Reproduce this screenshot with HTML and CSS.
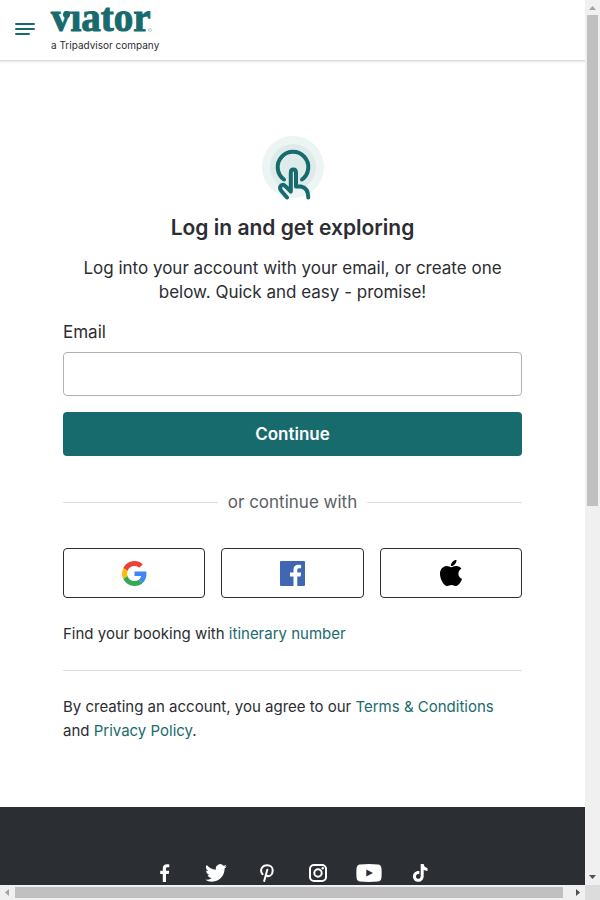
FILE: index.html
```html
<!DOCTYPE html>
<html lang="en">
<head>
<meta charset="utf-8">
<meta name="viewport" content="width=device-width, initial-scale=1">
<title>Viator login</title>
<link rel="stylesheet" href="styles.css">
</head>
<body>
<div class="frame">
  <div class="page">
    <header class="header">
      <button class="menu" type="button" aria-label="Menu">
        <svg width="20" height="14" viewBox="0 0 20 14"><path d="M1 2h18M1 7h18M1 12h13" stroke="currentColor" stroke-width="2" stroke-linecap="round"/></svg>
      </button>
      <a class="brand" href="#" aria-label="viator, a Tripadvisor company">
        <span class="wordmark">vıator<span class="dot"></span><span class="reg"></span></span>
        <span class="tagline">a Tripadvisor company</span>
      </a>
    </header>
    <main class="main">
      <svg class="tap" width="62" height="64" viewBox="0 0 62 64" fill="none">
        <circle cx="31" cy="31" r="31" fill="#ecf5f4"/>
        <circle cx="31" cy="31" r="23" fill="#deebeb"/>
        <g stroke="#186b6d" stroke-width="4" stroke-linecap="round" stroke-linejoin="round">
          <path d="M22 43.500A15.300 15.300 0 1 1 40 43.500"/>
          <path d="M25 61.500L19.400 55C16 50.500 20.200 47 23.600 50.400L28.800 55.600V37C28.800 32.400 34 32.400 34 37V50.500H39Q46.300 52 46.300 61.500"/>
        </g>
      </svg>
      <h1 class="title">Log in and get exploring</h1>
      <p class="intro">Log into your account with your email, or create one below. Quick and easy - promise!</p>
      <form class="form">
        <label class="label" for="email">Email</label>
        <input class="input" id="email" type="email">
        <button class="submit" type="button">Continue</button>
      </form>
      <div class="divider"><span>or continue with</span></div>
      <div class="providers">
        <button type="button" aria-label="Google">
          <svg width="25" height="25" viewBox="0 0 48 48"><path fill="#ea4335" d="M24 9.500c3.540 0 6.710 1.220 9.210 3.600l6.850-6.850C35.900 2.380 30.470 0 24 0 14.620 0 6.510 5.380 2.560 13.220l7.980 6.190C12.430 13.720 17.740 9.500 24 9.500z"/><path fill="#4285f4" d="M46.980 24.550c0-1.570-.15-3.090-.38-4.550H24v9.020h12.940c-.58 2.960-2.260 5.480-4.780 7.180l7.730 6c4.510-4.180 7.090-10.360 7.090-17.650z"/><path fill="#fbbc05" d="M10.530 28.590c-.48-1.450-.76-2.990-.76-4.590s.27-3.140.76-4.590l-7.980-6.190C.92 16.460 0 20.120 0 24c0 3.880.92 7.540 2.560 10.780l7.970-6.190z"/><path fill="#34a853" d="M24 48c6.480 0 11.930-2.130 15.890-5.810l-7.730-6c-2.150 1.450-4.920 2.300-8.160 2.300-6.260 0-11.570-4.220-13.470-9.910l-7.980 6.190C6.510 42.620 14.620 48 24 48z"/></svg>
        </button>
        <button type="button" aria-label="Facebook">
          <svg width="25" height="25" viewBox="0 0 25 25"><rect width="25" height="25" rx="1" fill="#4267b2"/><path fill="#fff" d="M13.500 25V15.400H10v-3.900h3.500V8.600c0-3.200 2-4.900 4.800-4.900q1.700 0 2.800.2v3.300h-2c-1.400 0-1.800.8-1.800 1.800v2.500h3.800l-.5 3.900h-3.300V25z"/></svg>
        </button>
        <button type="button" aria-label="Apple">
          <svg width="22" height="26" viewBox="4 26 376 445" preserveAspectRatio="none"><path d="M318.700 258.700c-.2-36.700 16.400-64.400 50-84.800-18.800-26.900-47.200-41.700-84.700-44.600-35.500-2.800-74.300 20.700-88.500 20.700-15 0-49.400-19.700-76.400-19.700C63.300 131.200 4 175.100 4 264.500q0 39.600 14.400 81.200c12.800 36.700 59 126.700 107.200 125.200 25.200-.6 43-17.900 75.800-17.900 31.800 0 48.300 17.900 76.400 17.900 48.600-.7 90.400-82.500 102.600-119.300-65.200-30.700-61.700-90-61.700-92.900zM262.100 94.500c27.300-32.400 24.800-61.900 24-72.500-24.100 1.400-52 16.400-67.900 34.900-17.500 19.800-27.800 44.300-25.600 71.900 26.100 2 49.900-11.400 69.500-34.300z"/></svg>
        </button>
      </div>
      <p class="note">Find your booking with <a href="#">itinerary number</a></p>
      <hr class="rule">
      <p class="note">By creating an account, you agree to our <a href="#">Terms &amp; Conditions</a> and <a href="#">Privacy Policy</a>.</p>
    </main>
    <footer class="footer">
      <nav class="social" aria-label="Social">
        <a href="#" aria-label="Facebook"><svg width="10" height="18" viewBox="0 0 10 18"><path d="M2.800 18V10H.2V6.700h2.600V4.300C2.800 1.500 4.400.2 6.900.2c1.200 0 2 .1 2.400.2v2.800H7.700c-1.400 0-1.700.6-1.700 1.600v1.900h3.200L8.700 10H6v8z"/></svg></a>
        <a href="#" aria-label="Twitter"><svg width="22" height="18" viewBox="0 2 24 20"><path d="M24 4.600c-.9.400-1.800.7-2.800.8 1-.6 1.800-1.600 2.200-2.700-1 .6-2 1-3.100 1.200a4.900 4.900 0 0 0-8.400 4.500C7.700 8.100 4.100 6.100 1.700 3.100a4.900 4.900 0 0 0 1.500 6.600c-.8 0-1.600-.2-2.200-.6v.1a4.900 4.900 0 0 0 3.900 4.800c-.7.200-1.500.2-2.200.1a4.900 4.900 0 0 0 4.600 3.400A9.900 9.900 0 0 1 0 19.500 13.900 13.900 0 0 0 7.500 21.700c9.100 0 14.300-7.700 14-14.600 1-.7 1.800-1.600 2.500-2.500z"/></svg></a>
        <a href="#" aria-label="Pinterest"><svg width="14" height="18" viewBox="0 0 14 18"><path class="line" d="M2.500 10.200C-.8 6 2.200 1.200 7.200 1.200c3.300 0 5.500 2.200 5.500 5.100 0 3.300-1.800 5.900-4.300 5.900-1.600 0-2.600-1-2.300-2.400M7.300 5.800L4.200 17"/></svg></a>
        <a href="#" aria-label="Instagram"><svg width="18" height="18" viewBox="0 0 18 18"><rect class="line" x="1" y="1" width="16" height="16" rx="4"/><circle class="line" cx="9" cy="9" r="3.700"/><circle cx="13.700" cy="4.300" r="1.200"/></svg></a>
        <a href="#" aria-label="YouTube"><svg width="26" height="18" viewBox="0 0 26 18"><path fill-rule="evenodd" d="M4 .4Q13-.3 22 .4Q25 .7 25.400 4Q25.900 9 25.400 14Q25 17.300 22 17.600Q13 18.300 4 17.600Q1 17.300.6 14Q.1 9 .6 4Q1 .7 4 .4zM10.300 5.400v7.200L17 9z"/></svg></a>
        <a href="#" aria-label="TikTok"><svg width="15" height="18" viewBox="0 0 15 18"><path d="M7.700 0h3c.2 2.200 1.600 3.600 3.800 3.900v3c-1.500 0-2.700-.5-3.800-1.200v6.400c0 7.800-10.700 7.400-10.700.3C0 9 2.800 6.600 6.300 7v3.200c-2-.5-3.300.6-3.300 2.200 0 3.400 4.700 3.300 4.700-.4z"/></svg></a>
      </nav>
    </footer>
  </div>
  <div class="bar bar-y" aria-hidden="true"><svg class="arrow" viewBox="0 0 15 15"><path fill="#a3a3a3" d="M4 10h7L7.500 6z"/></svg><div class="thumb"></div><svg class="arrow end" viewBox="0 0 15 15"><path fill="#505050" d="M4 5h7L7.500 9z"/></svg></div>
  <div class="bar bar-x" aria-hidden="true"><svg class="arrow" viewBox="0 0 15 15"><path fill="#a3a3a3" d="M9 4v7L5 7.500z"/></svg><div class="thumb"></div><svg class="arrow end" viewBox="0 0 15 15"><path fill="#505050" d="M6 4v7l4-3.500z"/></svg></div>
  <div class="corner"></div>
</div>
</body>
</html>
```
FILE: styles.css
```css
* { box-sizing: border-box; }
body {
  margin: 0;
  font-family: Inter, "Open Sans", sans-serif;
  font-size: 16px;
  line-height: 24px;
  color: #2b2d32;
  background: #fff;
}
h1, p { margin: 0; }
svg { display: block; }
a { color: #186b6d; text-decoration: none; }
button { font: inherit; cursor: pointer; }

.frame {
  display: grid;
  grid-template: minmax(0, 1fr) 15px / minmax(0, 1fr) 15px;
  height: 100vh;
}
.page {
  display: flex;
  flex-direction: column;
  overflow: hidden;
}

.header {
  display: flex;
  align-items: flex-start;
  gap: 16px;
  flex: none;
  height: 61px;
  padding: 0 15px;
  border-bottom: 1px solid #d9dadb;
  box-shadow: 0 1px 2px #0000001a;
}
.menu {
  margin-top: 22px;
  padding: 0;
  border: 0;
  background: none;
  color: #186b6d;
}
.brand { display: flex; flex-direction: column; }
.wordmark {
  position: relative;
  align-self: flex-start;
  font: bold 39px/36px "Liberation Serif", serif;
  -webkit-text-stroke: 1px #186b6d;
}
.dot {
  position: absolute;
  left: 12px;
  top: 11px;
  width: 7px;
  height: 7px;
  border-radius: 50%;
  background: #186b6d;
}
.reg {
  position: absolute;
  right: -1px;
  top: 28px;
  width: 4px;
  height: 4px;
  border: 1px solid #b4d0d0;
  border-radius: 50%;
}
.tagline {
  font-size: 10px;
  line-height: 18px;
  color: #2b2d32;
}

.main { flex: none; padding: 75px 63px 64px; }
.tap { margin: 0 auto 16px; }
.title {
  font-size: 21px;
  line-height: 24px;
  font-weight: 600;
  text-align: center;
}
.intro {
  margin: 16px 0;
  font-size: 17px;
  text-align: center;
}
.form { display: flex; flex-direction: column; }
.label { margin-bottom: 8px; font-size: 17px; }
.input {
  height: 44px;
  padding: 0 12px;
  border: 1px solid #afb0b2;
  border-radius: 4px;
  font: inherit;
  background: #fff;
}
.submit {
  height: 44px;
  margin-top: 16px;
  border: 0;
  border-radius: 4px;
  background: #186b6d;
  color: #fff;
  font-size: 17px;
  font-weight: 600;
}
.divider {
  display: flex;
  align-items: center;
  gap: 10px;
  margin: 34px 0;
  font-size: 17px;
  color: #5c5e65;
}
.divider::before, .divider::after {
  content: "";
  flex: 1;
  height: 1px;
  background: #dcdddf;
}
.providers {
  display: grid;
  grid-template-columns: repeat(3, 1fr);
  gap: 16px;
  margin-bottom: 24px;
}
.providers button {
  display: flex;
  align-items: center;
  justify-content: center;
  height: 50px;
  padding: 0;
  border: 1px solid #2b2d32;
  border-radius: 4px;
  background: #fff;
}
.note { font-size: 15px; }
.rule {
  height: 1px;
  margin: 24px 0;
  border: 0;
  background: #dcdddf;
}

.footer {
  flex: 1 0 auto;
  padding: 57px 16px 32px;
  background: #2b2e33;
}
.social {
  display: flex;
  justify-content: center;
  align-items: center;
  gap: 25px;
}
.social a {
  display: flex;
  justify-content: center;
  min-width: 26px;
}
.social svg { fill: #fff; }
.social .line {
  fill: none;
  stroke: #fff;
  stroke-width: 2;
  stroke-linecap: round;
}

.bar { display: flex; background: #f0f0f0; }
.bar-y { flex-direction: column; align-items: center; }
.bar-x { align-items: center; }
.arrow { flex: none; width: 15px; height: 15px; }
.end { margin-top: auto; }
.bar-x .end { margin-top: 0; margin-left: auto; }
.thumb { background: #c0c0c0; }
.bar-y .thumb { width: 11px; flex-basis: 55.5%; }
.bar-x .thumb { height: 11px; flex: 0 1 548px; }
.corner { background: #dcdcdc; }
```
